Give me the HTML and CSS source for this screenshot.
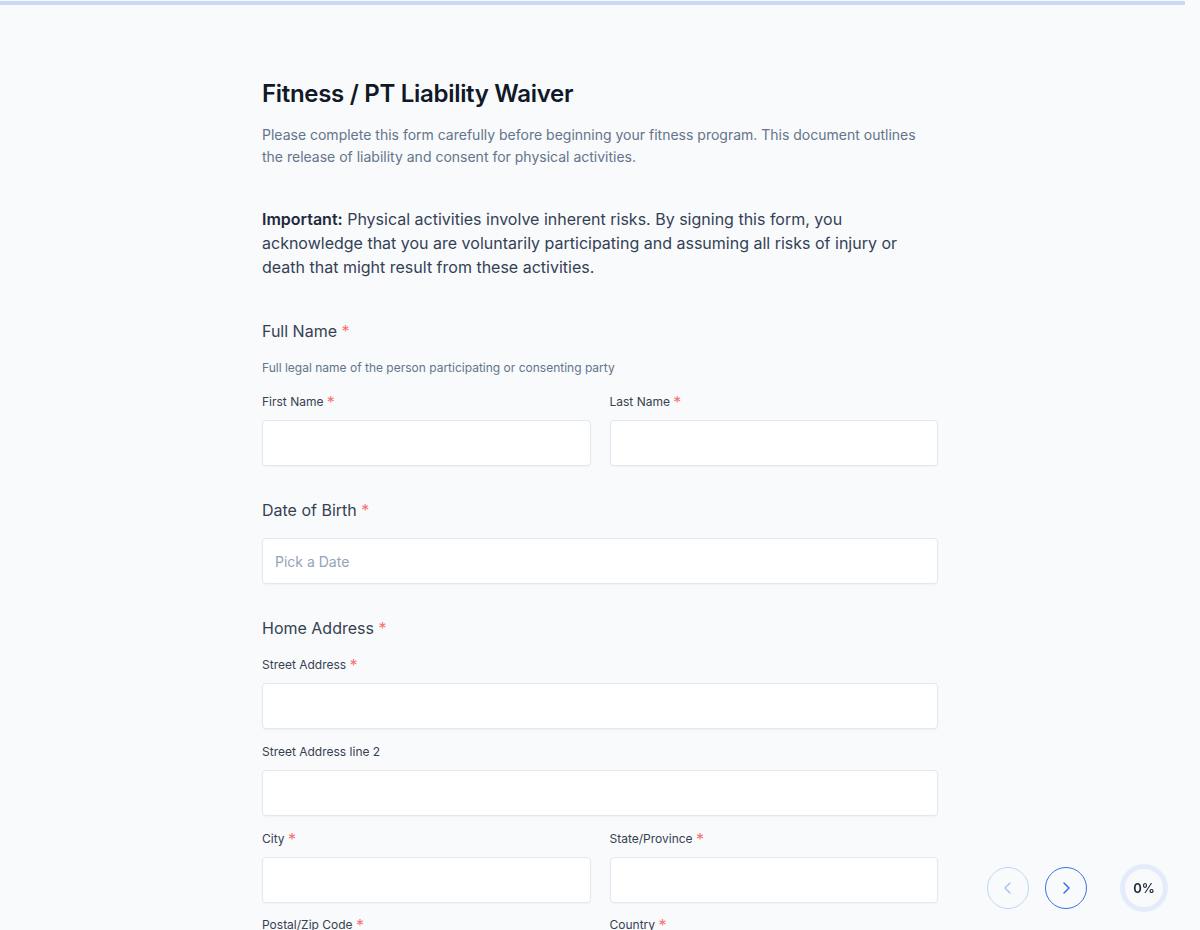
FILE: index.html
```html
<!DOCTYPE html>
<html lang="en">

<head>
    <meta charset="UTF-8">
    <meta name="viewport" content="width=device-width, initial-scale=1.0">
    <title>Fitness / PT Liability Waiver</title>
    <link rel="stylesheet" href="styles.css">
</head>

<body>
    <div class="top-progress"></div>

    <main class="form-wrap">
        <h1>Fitness / PT Liability Waiver</h1>
        <p class="intro">Please complete this form carefully before beginning your fitness program. This document outlines the release of liability and consent for physical activities.</p>

        <p class="notice"><strong>Important:</strong> Physical activities involve inherent risks. By signing this form, you acknowledge that you are voluntarily participating and assuming all risks of injury or death that might result from these activities.</p>

        <!-- Full name -->
        <section class="field-group">
            <h2>Full Name <span class="req">*</span></h2>
            <p class="hint">Full legal name of the person participating or consenting party</p>
            <div class="row">
                <div class="field">
                    <label>First Name <span class="req">*</span></label>
                    <input type="text">
                </div>
                <div class="field">
                    <label>Last Name <span class="req">*</span></label>
                    <input type="text">
                </div>
            </div>
        </section>

        <!-- Date of birth -->
        <section class="field-group">
            <h2>Date of Birth <span class="req">*</span></h2>
            <input type="text" placeholder="Pick a Date">
        </section>

        <!-- Address -->
        <section class="field-group">
            <h2>Home Address <span class="req">*</span></h2>
            <div class="field">
                <label>Street Address <span class="req">*</span></label>
                <input type="text">
            </div>
            <div class="field">
                <label>Street Address line 2</label>
                <input type="text">
            </div>
            <div class="row">
                <div class="field">
                    <label>City <span class="req">*</span></label>
                    <input type="text">
                </div>
                <div class="field">
                    <label>State/Province <span class="req">*</span></label>
                    <input type="text">
                </div>
            </div>
            <div class="row">
                <div class="field">
                    <label>Postal/Zip Code <span class="req">*</span></label>
                    <input type="text">
                </div>
                <div class="field">
                    <label>Country <span class="req">*</span></label>
                    <input type="text">
                </div>
            </div>
        </section>
    </main>

    <div class="pager">
        <button class="nav-btn prev" disabled>
            <svg width="16" height="16" viewBox="0 0 16 16"><polyline points="10,3 5,8 10,13" fill="none" stroke="currentColor" stroke-width="1.5" stroke-linecap="round" stroke-linejoin="round"/></svg>
        </button>
        <button class="nav-btn next">
            <svg width="16" height="16" viewBox="0 0 16 16"><polyline points="6,3 11,8 6,13" fill="none" stroke="currentColor" stroke-width="1.5" stroke-linecap="round" stroke-linejoin="round"/></svg>
        </button>
        <div class="percent">0%</div>
    </div>
</body>

</html>
```

FILE: styles.css
```css
body {
    font-family: Inter, "Noto Sans", sans-serif;
    background-color: #f8fafc;
    color: #334155;
    margin: 0;
}

.top-progress {
    margin-top: 1px;
    height: 4px;
    width: calc(100% - 15px);
    background-color: #c9daf6;
}

.form-wrap {
    width: 676px;
    margin: 0 auto;
    padding: 73px 0 40px;
}

h1 {
    font-size: 24px;
    font-weight: 600;
    color: #111827;
    margin: 0 0 14px;
    line-height: 32px;
    letter-spacing: -0.3px;
}

.intro {
    font-size: 14px;
    line-height: 22px;
    color: #64748b;
    margin: 0 0 39px;
}

.notice {
    font-size: 16px;
    line-height: 24px;
    color: #334155;
    margin: 0 0 40px;
}

.notice strong {
    font-weight: 600;
    color: #1e293b;
}

.field-group {
    margin-bottom: 32px;
}

.field-group > :last-child {
    margin-bottom: 0;
}

h2 {
    font-size: 16px;
    font-weight: 400;
    color: #374151;
    margin: 0 0 16px;
    line-height: 24px;
}

.req {
    color: #f87171;
}

label .req {
    font-size: 16px;
    line-height: 0;
    vertical-align: -2px;
}

.hint {
    font-size: 12px;
    color: #64748b;
    margin: 0 0 16px;
    line-height: 18px;
}

.row {
    display: grid;
    grid-template-columns: 1fr 1fr;
    gap: 19px;
    margin-bottom: 13px;
}

.field {
    margin-bottom: 14px;
}

.field + .row {
    margin-top: 2px;
}

.row .field {
    margin-bottom: 0;
}

label {
    display: block;
    font-size: 12px;
    color: #374151;
    line-height: 18px;
    margin-bottom: 9px;
}

input {
    display: block;
    box-sizing: border-box;
    width: 100%;
    height: 46px;
    padding: 0 12px;
    font-family: inherit;
    font-size: 14px;
    background-color: #fff;
    border: 1px solid #e2e8f0;
    border-radius: 4px;
    box-shadow: 0 1px 2px rgba(15, 23, 42, 0.04);
}

input::placeholder {
    color: #94a3b8;
}

.pager {
    position: fixed;
    right: 32px;
    bottom: 18px;
    display: flex;
    align-items: center;
    gap: 16px;
}

.nav-btn {
    width: 42px;
    height: 42px;
    border-radius: 50%;
    background: transparent;
    display: flex;
    align-items: center;
    justify-content: center;
    padding: 0;
    cursor: pointer;
}

.nav-btn.prev {
    border: 1px solid #bfd4f8;
    color: #aac4f2;
    cursor: not-allowed;
}

.nav-btn.next {
    border: 1px solid #3b6fe6;
    color: #3b6fe6;
}

.percent {
    margin-left: 17px;
    width: 48px;
    height: 48px;
    box-sizing: border-box;
    border: 5px solid #e4ecfb;
    border-radius: 50%;
    display: flex;
    align-items: center;
    justify-content: center;
    font-size: 13px;
    font-weight: 600;
    color: #1f2937;
}
```
